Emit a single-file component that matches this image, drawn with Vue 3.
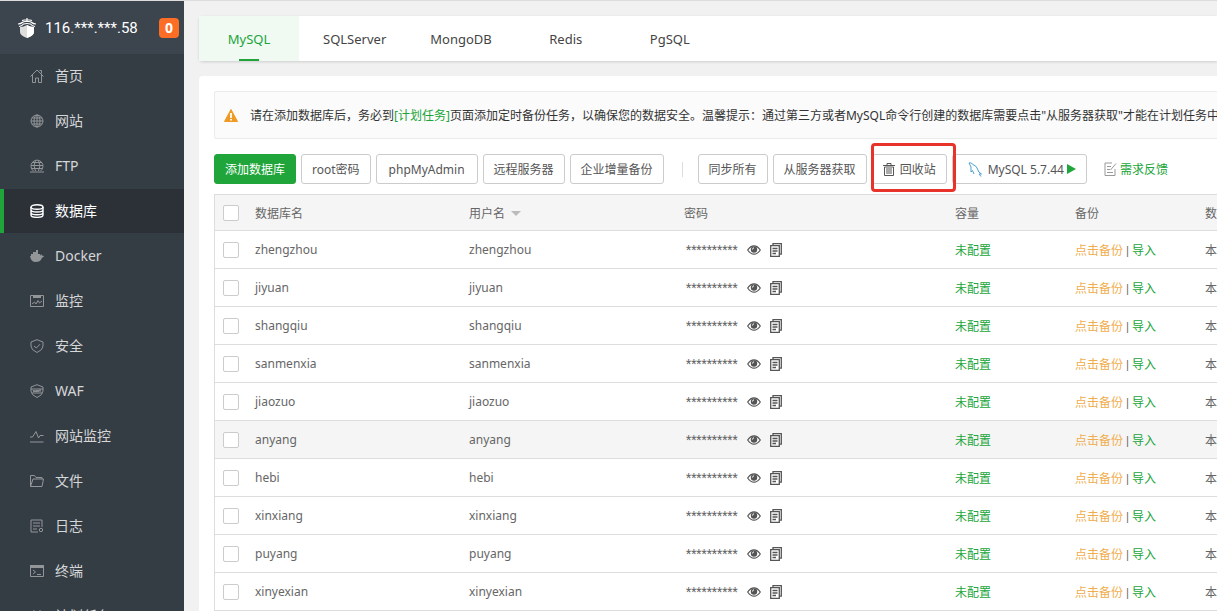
<script setup>
import { ref } from 'vue'

const menus = [
  { icon: 'home', title: '首页' },
  { icon: 'site', title: '网站' },
  { icon: 'ftp', title: 'FTP' },
  { icon: 'database', title: '数据库' },
  { icon: 'docker', title: 'Docker' },
  { icon: 'control', title: '监控' },
  { icon: 'safe', title: '安全' },
  { icon: 'waf', title: 'WAF' },
  { icon: 'monitor', title: '网站监控' },
  { icon: 'files', title: '文件' },
  { icon: 'logs', title: '日志' },
  { icon: 'xterm', title: '终端' },
  { icon: 'crontab', title: '计划任务' }
]
const activeMenu = ref('database')

const tabs = ['MySQL', 'SQLServer', 'MongoDB', 'Redis', 'PgSQL']
const activeTab = ref('MySQL')

const databases = ['zhengzhou', 'jiyuan', 'shangqiu', 'sanmenxia', 'jiaozuo', 'anyang', 'hebi', 'xinxiang', 'puyang', 'xinyexian']
const hovered = 'anyang'
</script>

<template>
  <div class="layout">
    <aside class="sidebar">
      <div class="server">
        <svg class="logo" viewBox="0 0 18 20">
          <path d="M9 0v4M4 2.500Q9 1 14 2.500M0 6Q3 6 5 4Q9 2.500 13 4Q15 6 18 6M1 8.500Q4 8 5.500 6Q9 5 12.500 6Q14 8 17 8.500" fill="none" stroke="#fff" stroke-width="1.200" />
          <path d="M2 9Q6 9 9 7Q12 9 16 9V14Q16 17.500 9 20Q2 17.500 2 14Z" fill="#ddd" />
          <path d="M9 7Q12 9 16 9V14Q16 17.500 9 20Z" fill="#fff" />
        </svg>
        <span class="ip">116.***.***.58</span>
        <span class="msg">0</span>
      </div>
      <nav class="menu">
        <a v-for="m in menus" :key="m.icon" href="#" :class="['menu-item', { active: m.icon === activeMenu }]" @click.prevent="activeMenu = m.icon">
          <svg class="menu-icon" viewBox="0 0 14 14">
            <path v-if="m.icon === 'home'" d="M.5 7.500 7 1l6.500 6.500M2.500 6v7.500h3V9h3v4.500h3V6M9.500 1.500h2v3" />
            <g v-else-if="m.icon === 'site'">
              <circle cx="7" cy="7" r="6" />
              <ellipse cx="7" cy="7" rx="3" ry="6" />
              <path d="M7 1v12M1 7h12M2 4h10M2 10h10" />
            </g>
            <g v-else-if="m.icon === 'ftp'">
              <path d="M3.500 12A6 6 0 1 1 10.500 12M5.500 12Q2.500 6.500 5.500 1.500M8.500 12Q11.500 6.500 8.500 1.500M1 6.500h12M2 3.500h10M2 9.500h10M0 13h14" />
            </g>
            <g v-else-if="m.icon === 'database'" stroke-width="1.400">
              <ellipse cx="7" cy="3" rx="6" ry="2.300" />
              <path d="M1 3v8c0 3.100 12 3.100 12 0V3M1 5.700c0 3 12 3 12 0M1 8.500c0 3 12 3 12 0" />
            </g>
            <path v-else-if="m.icon === 'docker'" class="solid" d="M0 7h1V5h2V3h3V1h2v4h2v2l1-2 1 1.500 2 .5-1 1.500h-1Q11 13 5.500 13 1 13 0 7Z" />
            <g v-else-if="m.icon === 'control'">
              <path d="M.5 1.500h13v11H.5zM2 10l2.500-2 1.500 2 2-3.500L9.500 9 12 7" />
              <path class="solid" d="M3 2h8v2H3z" />
            </g>
            <path v-else-if="m.icon === 'safe'" d="M7 .7 13 3v4q0 4-6 6.500Q1 11 1 7V3ZM4 7l2.300 2L10 5.200" />
            <g v-else-if="m.icon === 'waf'">
              <path d="M7 .7 13 3v4q0 4-6 6.500Q1 11 1 7V3Z" />
              <path d="M1 5h12M2 9h10M3 6l1 2 1-1.500L6 8l1-2 1 2 1-2h2M3 7h8" />
            </g>
            <path v-else-if="m.icon === 'monitor'" d="M0 8h2.500L6 2.500 8.500 9 10 6.500h3.500M0 13h13.500" />
            <path v-else-if="m.icon === 'files'" d="M.5 12.500v-11h4l1.500 2h6V5M.5 12.500 3 5h10.500l-1.500 7.500Z" />
            <g v-else-if="m.icon === 'logs'">
              <path d="M8 13H1V1h11v7M3 4h7M3 7h7M3 10h4" />
              <circle cx="11" cy="11" r="1.700" />
            </g>
            <g v-else-if="m.icon === 'xterm'">
              <path d="M.5 1.500h13v11H.5zM3 6l2.500 2L3 10M7 10.500h4" />
              <path class="solid" d="M0 1h14v3H0z" />
            </g>
            <path v-else d="M.5 2.500h13v11H.5zM4 1v3M10 1v3M1 6h12M4 9h6" />
          </svg>
          <span class="menu-title">{{ m.title }}</span>
        </a>
      </nav>
    </aside>

    <main class="main">
      <div class="tabs">
        <button v-for="t in tabs" :key="t" :class="['tab', { on: t === activeTab }]" @click="activeTab = t">{{ t }}</button>
      </div>

      <section class="panel">
        <div class="notice">
          <svg class="warn" viewBox="0 0 14 13">
            <path d="M7 .5 13.500 12.500H.5Z" fill="#ef9a23" stroke="#ef9a23" stroke-linejoin="round" />
            <path d="M7 4v5M7 10v1.500" stroke="#fff" stroke-width="1.800" />
          </svg>
          <p>请在添加数据库后，务必到<a href="#">[计划任务]</a>页面添加定时备份任务，以确保您的数据安全。温馨提示：通过第三方或者MySQL命令行创建的数据库需要点击"从服务器获取"才能在计划任务中</p>
        </div>

        <div class="toolbar">
          <button class="btn primary">添加数据库</button>
          <button class="btn">root密码</button>
          <button class="btn wide">phpMyAdmin</button>
          <button class="btn">远程服务器</button>
          <button class="btn">企业增量备份</button>
          <span class="divider"></span>
          <button class="btn">同步所有</button>
          <button class="btn">从服务器获取</button>
          <div class="recycle">
            <button class="btn">
              <svg class="trash" viewBox="0 0 12 13">
                <path d="M0 2.500h12M4 2V.5h4V2M1.500 4v8.500h9V4ZM4 5v6M6 5v6M8 5v6" fill="none" stroke="#555" />
              </svg>
              回收站
            </button>
            <span class="mark"></span>
          </div>
          <button class="btn version">
            <svg class="dolphin" viewBox="0 0 14 15">
              <path d="M1 1Q3 0 5 2.500 9 4 10 8q0 2 3.500 4L11 12l2 2.500M1 1l2 4v5l1.500-1.500L6 12" fill="none" stroke="#4a9fd0" />
            </svg>
            MySQL 5.7.44
            <svg class="play" viewBox="0 0 9 10"><path d="M0 0 9 5 0 10Z" fill="#20a53a" /></svg>
          </button>
          <a class="feedback" href="#">
            <svg viewBox="0 0 13 14">
              <path d="M8 1H1v12.500h10V7M3 4.500h4M3 7.500h3M3 10.500h6M6.500 8 12 1.500" fill="none" stroke="#999" />
            </svg>
            需求反馈
          </a>
        </div>

        <table class="table">
          <colgroup>
            <col class="c-check" />
            <col class="c-name" />
            <col class="c-user" />
            <col class="c-pass" />
            <col class="c-quota" />
            <col class="c-backup" />
            <col />
          </colgroup>
          <thead>
            <tr>
              <th><input type="checkbox" aria-label="全选" /></th>
              <th>数据库名</th>
              <th>用户名<i class="sort"></i></th>
              <th>密码</th>
              <th>容量</th>
              <th>备份</th>
              <th>数据库位置</th>
            </tr>
          </thead>
          <tbody>
            <tr v-for="name in databases" :key="name" :class="{ hover: name === hovered }">
              <td><input type="checkbox" :aria-label="name" /></td>
              <td>{{ name }}</td>
              <td>{{ name }}</td>
              <td>
                <div class="password">
                  <span class="stars">**********</span>
                  <button class="icon-btn" aria-label="显示密码">
                    <svg class="eye" viewBox="0 0 14 10">
                      <path d="M.7 5Q3.500.8 7 .8T13.300 5Q10.500 9.200 7 9.200T.7 5Z" fill="none" stroke="#555" stroke-width="1.200" />
                      <circle cx="7" cy="4.500" r="3.200" fill="#555" />
                      <path d="M5.500 4.500Q5.500 3 7 2.800" fill="none" stroke="#fff" />
                    </svg>
                  </button>
                  <button class="icon-btn" aria-label="复制密码">
                    <svg class="copy" viewBox="0 0 12 14">
                      <path d="M3 2.500V.700h8.300v10.500H9.500" fill="none" stroke="#555" stroke-width="1.300" />
                      <path d="M.7 2.700h8.600v10.600H.7ZM2.500 5.500h5M2.500 8h5M2.500 10.500h3.500" fill="none" stroke="#555" stroke-width="1.300" />
                    </svg>
                  </button>
                </div>
              </td>
              <td><a href="#">未配置</a></td>
              <td><a class="orange" href="#">点击备份</a><span class="pipe"> | </span><a href="#">导入</a></td>
              <td>本地数据库</td>
            </tr>
          </tbody>
        </table>
      </section>
    </main>
  </div>
</template>

<style>
body {
  background: #f1f1f1;
  overflow: hidden;
}
</style>

<style scoped>
.layout {
  display: flex;
  height: 100vh;
  box-sizing: border-box;
  overflow: hidden;
  border-top: 1px solid #dcdcdc;
  font-family: "Noto Sans", "Noto Sans CJK SC", sans-serif;
  font-size: 12px;
  color: #666;
}

a {
  color: #20a53a;
  text-decoration: none;
}

button {
  font-family: inherit;
  cursor: pointer;
}

.sidebar {
  flex: none;
  width: 184px;
  background: #353d44;
}

.server {
  display: flex;
  align-items: center;
  height: 53px;
  padding: 0 5px 0 18px;
  background: #3c444d;
  color: #fff;
}

.logo {
  width: 18px;
  height: 20px;
  margin-right: 9px;
}

.ip {
  flex: 1;
  font-family: Roboto, sans-serif;
  font-size: 15px;
}

.msg {
  width: 20px;
  border-radius: 4px;
  background: #fc6d26;
  font-size: 14px;
  font-weight: 700;
  line-height: 20px;
  text-align: center;
}

.menu-item {
  display: flex;
  align-items: center;
  gap: 11px;
  height: 44px;
  margin-bottom: 1px;
  padding-left: 26px;
  border-left: 4px solid transparent;
  color: #d5d7d9;
  font-size: 14px;
}

.menu-title {
  padding-bottom: 2px;
}

.menu-icon {
  width: 14px;
  height: 14px;
  fill: none;
  stroke: #929699;
}

.menu-icon .solid {
  fill: #929699;
  stroke: none;
}

.menu-item.active {
  border-left-color: #20a53a;
  background: #2c3138;
  color: #fff;
}

.menu-item.active .menu-icon {
  stroke: #fff;
}

.main {
  flex: 1;
  min-width: 0;
  padding: 15px 0 0 15px;
  overflow: hidden;
}

.tabs {
  display: flex;
  gap: 4px;
  height: 45px;
  border-radius: 4px 0 0 4px;
  background: #fff;
  box-shadow: 0 1px 3px rgba(0, 0, 0, 0.15);
}

.tab {
  position: relative;
  min-width: 100px;
  padding: 0 20px;
  border: 0;
  background: none;
  color: #444;
  font-size: 13px;
}

.tab.on {
  background: #f0f9f2;
  color: #20a53a;
}

.tab.on::after {
  content: "";
  position: absolute;
  bottom: 0;
  left: 40px;
  width: 20px;
  height: 2px;
  background: #20a53a;
}

.panel {
  min-width: 1200px;
  margin-top: 15px;
  padding: 15px;
  border-radius: 4px;
  background: #fff;
}

.notice {
  display: flex;
  align-items: center;
  gap: 12px;
  height: 46px;
  padding-left: 9px;
  border: 1px solid #ebebeb;
  border-radius: 2px;
  background: #fbfbfb;
  color: #333;
  white-space: nowrap;
}

.notice p {
  margin: 0;
}

.warn {
  width: 14px;
  height: 13px;
}

.toolbar {
  display: flex;
  align-items: center;
  gap: 5px;
  margin: 15px 0 10px;
}

.btn {
  display: flex;
  align-items: center;
  height: 30px;
  padding: 0 10px;
  border: 1px solid #ccc;
  border-radius: 3px;
  background: #fff;
  color: #555;
  font-size: 12px;
  white-space: nowrap;
}

.btn.primary {
  border-color: #20a53a;
  background: #20a53a;
  color: #fff;
}

.btn.wide {
  padding: 0 12px;
}

.divider {
  width: 1px;
  height: 15px;
  margin: 0 10px 0 13px;
  background: #ddd;
}

.recycle {
  position: relative;
}

.trash {
  width: 12px;
  height: 13px;
  margin-right: 5px;
}

.mark {
  position: absolute;
  z-index: 1;
  top: -11px;
  right: -9px;
  bottom: -8px;
  left: -1px;
  border: 3px solid #e8332a;
  border-radius: 4px;
}

.btn.version {
  padding-left: 15px;
}

.dolphin {
  width: 14px;
  height: 15px;
  margin-right: 6px;
}

.play {
  width: 9px;
  height: 10px;
  margin-left: 3px;
}

.feedback {
  display: flex;
  align-items: center;
  gap: 3px;
  margin-left: 12px;
}

.feedback svg {
  width: 13px;
  height: 14px;
}

.table {
  width: 100%;
  border: 1px solid #ddd;
  border-spacing: 0;
  table-layout: fixed;
}

.c-check {
  width: 32px;
}

.c-name {
  width: 214px;
}

.c-user {
  width: 215px;
}

.c-pass {
  width: 271px;
}

.c-quota {
  width: 120px;
}

.c-backup {
  width: 130px;
}

th,
td {
  box-sizing: border-box;
  height: 38px;
  padding: 0 8px;
  border-bottom: 1px solid #ddd;
  font-weight: 400;
  text-align: left;
  white-space: nowrap;
}

th {
  height: 36px;
  background: #f5f5f5;
}

.hover td {
  background: #f5f5f5;
}

input[type="checkbox"] {
  display: block;
  width: 16px;
  height: 16px;
  margin: 0;
  appearance: none;
  border: 1px solid #ccc;
  border-radius: 2px;
  background: #fff;
}

.sort {
  display: inline-block;
  margin: 0 0 2px 6px;
  border: 5px solid transparent;
  border-top-color: #bbb;
  border-bottom: 0;
}

.password {
  display: flex;
  align-items: center;
}

.stars,
.pipe {
  font-family: Roboto, sans-serif;
}

.stars {
  margin: 0 9px 0 2px;
}

.icon-btn {
  display: flex;
  margin-right: 9px;
  padding: 0;
  border: 0;
  background: none;
}

.eye {
  width: 14px;
  height: 10px;
}

.copy {
  width: 12px;
  height: 14px;
}

.orange {
  color: #f0ad4e;
}
</style>
